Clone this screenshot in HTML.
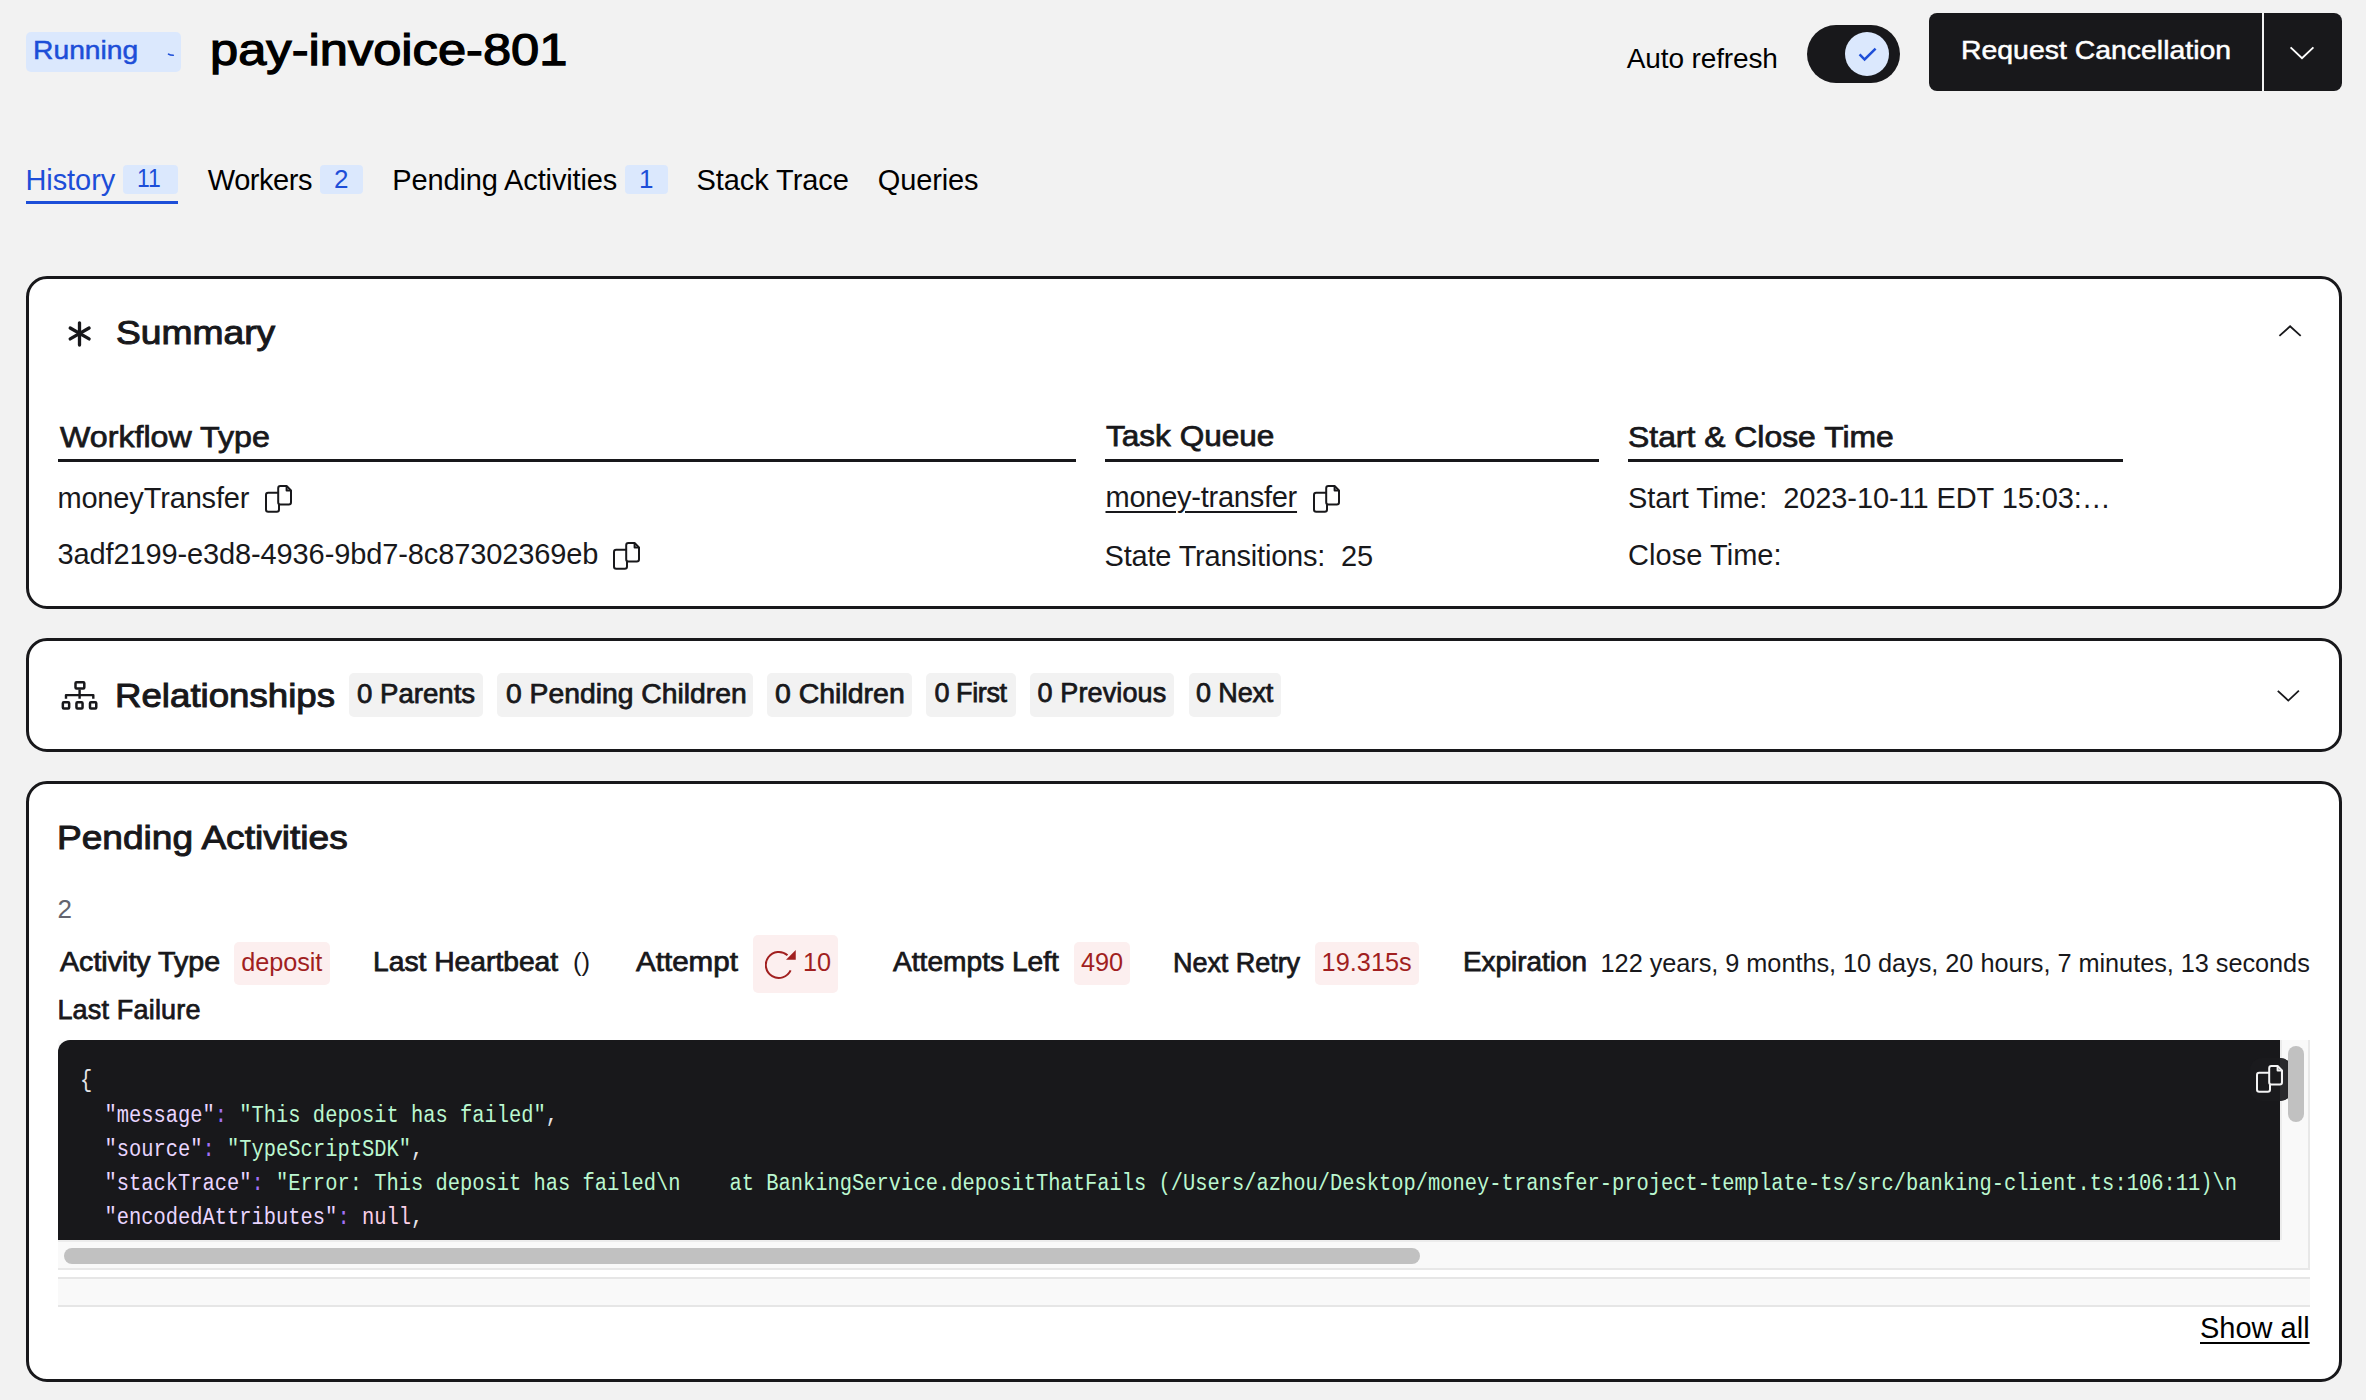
<!DOCTYPE html>
<html><head><meta charset="utf-8">
<style>
html,body{margin:0;padding:0;}
body{width:2366px;height:1400px;overflow:hidden;background:#f2f2f2;position:relative;font-family:"Liberation Sans",sans-serif;color:#000;}
.a{position:absolute;white-space:nowrap;line-height:1;}
.card{position:absolute;box-sizing:border-box;border:3px solid #18181b;border-radius:21px;background:#fff;}
.chip{position:absolute;background:#f2f2f2;border-radius:5px;}
.k{color:#e9d5ff;}.p{color:#a371f7;}.g{color:#bbf7d0;}.n{color:#fbcfe8;}
.pv{font-weight:normal;-webkit-text-stroke:0.75px #18181b;color:#18181b;}
.hv{-webkit-text-stroke:1px #18181b;}
</style></head>
<body>
<svg width="0" height="0" style="position:absolute"><defs>
<g id="cpy" fill="none" stroke-width="2" stroke-linejoin="round">
<path d="M13.2 3.2Q13.2 1 15.4 1H21.6L26 5.4V17.2Q26 19.4 23.8 19.4H15.4Q13.2 19.4 13.2 17.2Z"/>
<path d="M21.6 1V5.4H26"/>
<path d="M13.2 7.8H3.2Q1 7.8 1 10V24.6Q1 26.8 3.2 26.8H11.8Q14 26.8 14 24.6V19.4"/>
</g></defs></svg>
<!-- header -->
<div class="a" style="left:26px;top:32px;width:155px;height:40px;background:#dbe8fd;border-radius:5px;"></div>
<div class="a" id="running" style="-webkit-text-stroke:0.5px #1d4ed8;left:33.00px;top:37.00px;font-size:26px;font-weight:normal;color:#1d4ed8;;letter-spacing:0px;transform:scaleX(1.0872);transform-origin:0 0">Running</div>
<svg class="a" style="left:165px;top:50px;" width="12" height="8" viewBox="165 50 12 8"><path d="M168.5 54.2Q170 55.3 173.3 55.3" fill="none" stroke="#1d4ed8" stroke-width="1.6" stroke-linecap="round"/></svg>
<div class="a" id="title" style="left:210.40px;top:27.00px;font-size:45px;font-weight:normal;-webkit-text-stroke:1.25px #000;transform:scaleX(1.1251);transform-origin:0 0">pay-invoice-801</div>

<div class="a" id="autoref" style="left:1626.80px;top:44.50px;font-size:28px;;letter-spacing:-0.135px">Auto refresh</div>
<div class="a" style="left:1807px;top:25px;width:93px;height:58px;background:#18181b;border-radius:29px;"></div>
<div class="a" style="left:1845px;top:32px;width:44px;height:44px;background:#dbe8fd;border-radius:50%;"></div>
<svg class="a" style="left:1850px;top:40px;" width="32" height="26" viewBox="1850 40 32 26"><path d="M1859.6 54.3L1864.6 59.5L1875.6 48.6" fill="none" stroke="#1d4ed8" stroke-width="2.5"/></svg>

<div class="a" style="left:1929px;top:13px;width:333px;height:78px;background:#18181b;border-radius:8px 0 0 8px;"></div>
<div class="a" style="left:2264px;top:13px;width:78px;height:78px;background:#18181b;border-radius:0 8px 8px 0;"></div>
<div class="a" id="reqcan" style="-webkit-text-stroke:0.5px #fff;left:1960.60px;top:37.20px;font-size:26px;color:#fff;font-weight:normal;;letter-spacing:0px;transform:scaleX(1.0927);transform-origin:0 0">Request Cancellation</div>
<svg class="a" style="left:2285px;top:40px;" width="34" height="24" viewBox="2285 40 34 24"><path d="M2290.6 47.4L2302 58.3L2313.4 47.4" fill="none" stroke="#fff" stroke-width="1.9"/></svg>

<!-- tabs -->
<div class="a" id="t_hist" style="left:25.40px;top:165.70px;font-size:29px;color:#1d4ed8;;letter-spacing:-0.065px">History</div>
<div class="a" style="left:123px;top:165px;width:55px;height:29px;background:#dbe8fd;border-radius:4px;"></div>
<div class="a" id="t_h11" style="left:137.10px;top:165.90px;font-size:25px;color:#1d4ed8;letter-spacing:0px;transform:scaleX(0.9177);transform-origin:0 0">11</div>
<div class="a" style="left:26px;top:200.5px;width:152px;height:3.5px;background:#1d4ed8;"></div>

<div class="a" id="t_work" style="left:207.80px;top:165.70px;font-size:29px;;letter-spacing:-0.465px">Workers</div>
<div class="a" style="left:320px;top:165px;width:43px;height:29px;background:#dbe8fd;border-radius:4px;"></div>
<div class="a" id="t_w2" style="left:334.00px;top:165.70px;font-size:26px;color:#1d4ed8;;letter-spacing:0.000px">2</div>

<div class="a" id="t_pend" style="left:392.30px;top:165.70px;font-size:29px;;letter-spacing:-0.133px">Pending Activities</div>
<div class="a" style="left:625px;top:165px;width:43px;height:29px;background:#dbe8fd;border-radius:4px;"></div>
<div class="a" id="t_p1" style="left:639.00px;top:165.60px;font-size:26px;color:#1d4ed8;;letter-spacing:0.000px">1</div>

<div class="a" id="t_stack" style="left:696.40px;top:165.70px;font-size:29px;;letter-spacing:-0.060px">Stack Trace</div>
<div class="a" id="t_quer" style="left:877.80px;top:165.70px;font-size:29px;;letter-spacing:-0.131px">Queries</div>

<!-- summary card -->
<div class="card" style="left:26px;top:276px;width:2316px;height:333px;"></div>

<svg class="a" style="left:64px;top:318px;" width="30" height="30" viewBox="0 0 30 30"><g stroke="#18181b" stroke-width="3.3" stroke-linecap="round"><path d="M15.5 4.8v22.3"/><path d="M6.2 10L25.1 20.9"/><path d="M6.2 20.9L25.1 10"/></g></svg>
<div class="a pv hv" id="h_sum" style="left:115.50px;top:315.00px;font-size:34px;;letter-spacing:0px;transform:scaleX(1.0945);transform-origin:0 0">Summary</div>
<svg class="a" style="left:2270px;top:318px;" width="40" height="24" viewBox="2270 318 40 24"><path d="M2279.4 335.9L2290.1 326.3L2300.7 335.9" fill="none" stroke="#18181b" stroke-width="1.8"/></svg>

<div class="a pv" id="h_wt" style="left:60.00px;top:421.50px;font-size:30px;;letter-spacing:0px;transform:scaleX(1.0726);transform-origin:0 0">Workflow Type</div>
<div class="a" style="left:58px;top:459px;width:1018px;height:3px;background:#18181b;"></div>
<div class="a pv" id="h_tq" style="left:1105.75px;top:421.00px;font-size:30px;;letter-spacing:0px;transform:scaleX(1.0518);transform-origin:0 0">Task Queue</div>
<div class="a" style="left:1105px;top:459px;width:494px;height:3px;background:#18181b;"></div>
<div class="a pv" id="h_sc" style="left:1628.00px;top:421.50px;font-size:30px;;letter-spacing:0px;transform:scaleX(1.0629);transform-origin:0 0">Start &amp; Close Time</div>
<div class="a" style="left:1628px;top:459px;width:495px;height:3px;background:#18181b;"></div>

<div class="a" id="v_mt" style="left:57.40px;top:484.00px;font-size:29px;color:#18181b;;letter-spacing:-0.152px">moneyTransfer</div>
<div class="a" id="v_uuid" style="left:57.40px;top:540.30px;font-size:29px;color:#18181b;;letter-spacing:-0.114px">3adf2199-e3d8-4936-9bd7-8c87302369eb</div>
<div class="a" id="v_tq" style="left:1105.50px;top:483.00px;font-size:29px;color:#18181b;text-decoration:underline;text-decoration-thickness:2px;text-underline-offset:4px;;letter-spacing:-0.249px">money-transfer</div>
<div class="a" id="v_st" style="left:1104.50px;top:541.60px;font-size:29px;color:#18181b;;letter-spacing:-0.186px">State Transitions:&nbsp; 25</div>
<div class="a" id="v_start" style="left:1628.00px;top:484.00px;font-size:29px;color:#18181b;;letter-spacing:-0.088px">Start Time:&nbsp; 2023-10-11 EDT 15:03:…</div>
<div class="a" id="v_close" style="left:1628.00px;top:541.00px;font-size:29px;color:#18181b;;letter-spacing:0.050px">Close Time:</div>

<svg class="a" style="left:265px;top:485px;" width="28" height="28" viewBox="0 0 28 28"><use href="#cpy" stroke="#18181b"/></svg>
<svg class="a" style="left:613px;top:542px;" width="28" height="28" viewBox="0 0 28 28"><use href="#cpy" stroke="#18181b"/></svg>
<svg class="a" style="left:1313px;top:485px;" width="28" height="28" viewBox="0 0 28 28"><use href="#cpy" stroke="#18181b"/></svg>

<!-- relationships card -->
<div class="card" style="left:26px;top:638px;width:2316px;height:114px;"></div>
<svg class="a" style="left:60px;top:680px;" width="40" height="32" viewBox="0 0 40 32"><g fill="none" stroke="#18181b" stroke-width="2.5" stroke-linejoin="round">
<rect x="15.5" y="2.2" width="8.8" height="6.2" rx="1"/>
<path d="M19.6 9.5V18.8M6 18.8V15.1H33.3V18.8" stroke-width="2.4"/>
<rect x="2.85" y="22.25" width="6.3" height="6.3" rx="1"/>
<rect x="16.45" y="22.25" width="6.1" height="6.3" rx="1"/>
<rect x="30" y="22.25" width="6.25" height="6.3" rx="1"/>
</g></svg>
<div class="a pv hv" id="h_rel" style="left:114.50px;top:677.50px;font-size:34px;;letter-spacing:0px;transform:scaleX(1.0782);transform-origin:0 0">Relationships</div>
<div class="chip" style="left:349px;top:673px;width:134px;height:44px;"></div>
<div class="a pv" id="c1" style="left:357.00px;top:680.50px;font-size:27px;;letter-spacing:0px;transform:scaleX(1.0225);transform-origin:0 0">0 Parents</div>
<div class="chip" style="left:497px;top:673px;width:256px;height:44px;"></div>
<div class="a pv" id="c2" style="left:505.50px;top:680.50px;font-size:27px;;letter-spacing:0px;transform:scaleX(1.0480);transform-origin:0 0">0 Pending Children</div>
<div class="chip" style="left:767px;top:673px;width:145px;height:44px;"></div>
<div class="a pv" id="c3" style="left:775.00px;top:680.50px;font-size:27px;;letter-spacing:0px;transform:scaleX(1.0540);transform-origin:0 0">0 Children</div>
<div class="chip" style="left:926px;top:673px;width:90px;height:44px;"></div>
<div class="a pv" id="c4" style="left:934.40px;top:680.30px;font-size:27px;;letter-spacing:-0.399px">0 First</div>
<div class="chip" style="left:1030px;top:673px;width:144px;height:44px;"></div>
<div class="a pv" id="c5" style="left:1037.60px;top:680.30px;font-size:27px;;letter-spacing:0.111px">0 Previous</div>
<div class="chip" style="left:1189px;top:673px;width:92px;height:44px;"></div>
<div class="a pv" id="c6" style="left:1196.10px;top:680.30px;font-size:27px;;letter-spacing:-0.160px">0 Next</div>
<svg class="a" style="left:2270px;top:682px;" width="40" height="26" viewBox="2270 682 40 26"><path d="M2277.8 690.9L2288.3 700.6L2298.9 690.7" fill="none" stroke="#18181b" stroke-width="1.8"/></svg>

<!-- pending activities card -->
<div class="card" style="left:26px;top:781px;width:2316px;height:601px;"></div>
<div class="a pv hv" id="h_pa" style="left:57.00px;top:820.00px;font-size:34px;;letter-spacing:0px;transform:scaleX(1.0909);transform-origin:0 0">Pending Activities</div>
<div class="a" id="n2" style="left:57.40px;top:896.10px;font-size:26px;color:#64646e;;letter-spacing:0.000px">2</div>

<div class="a pv" id="l_at" style="left:60.00px;top:949.00px;font-size:27px;;letter-spacing:0px;transform:scaleX(1.0605);transform-origin:0 0">Activity Type</div>
<div class="chip" style="left:234px;top:942px;width:96px;height:43px;background:#fcefef;"></div>
<div class="a" id="v_dep" style="left:241.30px;top:950.10px;font-size:25.3px;color:#a11f1f;;letter-spacing:-0.102px">deposit</div>
<div class="a pv" id="l_lh" style="left:372.50px;top:949.00px;font-size:27px;;letter-spacing:0px;transform:scaleX(1.0455);transform-origin:0 0">Last Heartbeat</div>
<div class="a" id="v_lh" style="left:573.00px;top:950.00px;font-size:25.3px;color:#18181b;;letter-spacing:0px;transform:scaleX(1.0151);transform-origin:0 0">()</div>
<div class="a pv" id="l_att" style="left:635.50px;top:949.00px;font-size:27px;;letter-spacing:0px;transform:scaleX(1.0948);transform-origin:0 0">Attempt</div>
<div class="chip" style="left:753px;top:935px;width:85px;height:58px;background:#fcefef;"></div>
<svg class="a" style="left:765px;top:948px;" width="34" height="34" viewBox="0 0 34 34"><path d="M25.6 22.4A13 13 0 1 1 22.5 7.3" fill="none" stroke="#a11f1f" stroke-width="2"/><path d="M30.75 2V11.75H21Z" fill="#a11f1f"/></svg>
<div class="a" id="v_att" style="left:803.00px;top:950.00px;font-size:25.3px;color:#a11f1f;;letter-spacing:0.000px">10</div>
<div class="a pv" id="l_al" style="left:892.50px;top:949.00px;font-size:27px;;letter-spacing:0px;transform:scaleX(1.0426);transform-origin:0 0">Attempts Left</div>
<div class="chip" style="left:1074px;top:942px;width:56px;height:43px;background:#fcefef;"></div>
<div class="a" id="v_al" style="left:1081.00px;top:950.00px;font-size:25.3px;color:#a11f1f;;letter-spacing:-0.100px">490</div>
<div class="a pv" id="l_nr" style="left:1173.00px;top:949.60px;font-size:27px;;letter-spacing:-0.047px">Next Retry</div>
<div class="chip" style="left:1315px;top:942px;width:104px;height:43px;background:#fcefef;"></div>
<div class="a" id="v_nr" style="left:1321.60px;top:950.00px;font-size:25.3px;color:#a11f1f;;letter-spacing:0.015px">19.315s</div>
<div class="a pv" id="l_ex" style="left:1462.50px;top:949.00px;font-size:27px;;letter-spacing:0px;transform:scaleX(1.0336);transform-origin:0 0">Expiration</div>
<div class="a" id="v_ex" style="left:1600.60px;top:951.00px;font-size:25.3px;color:#18181b;;letter-spacing:-0.039px">122 years, 9 months, 10 days, 20 hours, 7 minutes, 13 seconds</div>
<div class="a pv" id="l_lf" style="left:57.40px;top:996.70px;font-size:27px;;letter-spacing:0.182px">Last Failure</div>

<!-- code block -->
<div class="a" style="left:58px;top:1040px;width:2252px;height:230px;background:#f9f9f9;box-sizing:border-box;border-right:2px solid #e8e8e8;border-bottom:2px solid #e8e8e8;"></div>
<div class="a" style="left:58px;top:1240px;width:2222px;height:2px;background:#ececec;"></div>
<div class="a" style="left:2280px;top:1040px;width:2px;height:200px;background:#ececec;"></div>
<div class="a" style="left:58px;top:1040px;width:2222px;height:200px;background:#18181b;border-top-left-radius:12px;overflow:hidden;">
<div style="position:absolute;left:0;top:0;width:4000px;font-family:'Liberation Mono',monospace;font-size:20.43px;line-height:1;color:#e4e4e7;">
<div class="cl" id="cl0" style="position:absolute;left:22px;top:29px;transform:scaleY(1.2);transform-origin:0 0;">{</div>
<div class="cl" id="cl1" style="position:absolute;left:22px;top:64px;transform:scaleY(1.2);transform-origin:0 0;white-space:pre;">  <span class="k">"message"</span><span class="p">:</span> <span class="g">"This deposit has failed"</span>,</div>
<div class="cl" id="cl2" style="position:absolute;left:22px;top:98px;transform:scaleY(1.2);transform-origin:0 0;white-space:pre;">  <span class="k">"source"</span><span class="p">:</span> <span class="g">"TypeScriptSDK"</span>,</div>
<div class="cl" id="cl3" style="position:absolute;left:22px;top:132px;transform:scaleY(1.2);transform-origin:0 0;white-space:pre;">  <span class="k">"stackTrace"</span><span class="p">:</span> <span class="g">"Error: This deposit has failed\n    at BankingService.depositThatFails (/Users/azhou/Desktop/money-transfer-project-template-ts/src/banking-client.ts:106:11)\n    at async Activity.deposit</span></div>
<div class="cl" id="cl4" style="position:absolute;left:22px;top:166px;transform:scaleY(1.2);transform-origin:0 0;white-space:pre;">  <span class="k">"encodedAttributes"</span><span class="p">:</span> <span class="n">null</span>,</div>
</div></div>
<div class="a" style="left:2250px;top:1058px;width:42px;height:43px;background:#1a1a1d;border-radius:12px;"></div>
<div class="a" style="left:2280px;top:1058px;width:12px;height:43px;background:#2a2a2d;border-radius:0 12px 12px 0;"></div>
<svg class="a" style="left:2256px;top:1065px;" width="28" height="28" viewBox="0 0 28 28"><use href="#cpy" stroke="#f4f4f5"/></svg>
<div class="a" style="left:2288px;top:1046px;width:16px;height:76px;background:#c1c1c1;border-radius:8px;"></div>
<div class="a" style="left:64px;top:1248px;width:1356px;height:16px;background:#c1c1c1;border-radius:8px;"></div>
<div class="a" style="left:58px;top:1277px;width:2252px;height:30px;background:#f9f9f9;box-sizing:border-box;border-top:2px solid #e6e6e6;border-bottom:2px solid #e6e6e6;"></div>
<div class="a" id="showall" style="left:2200px;top:1314px;font-size:29px;color:#000;text-decoration:underline;text-decoration-thickness:2px;text-underline-offset:4px;">Show all</div>
</body></html>
